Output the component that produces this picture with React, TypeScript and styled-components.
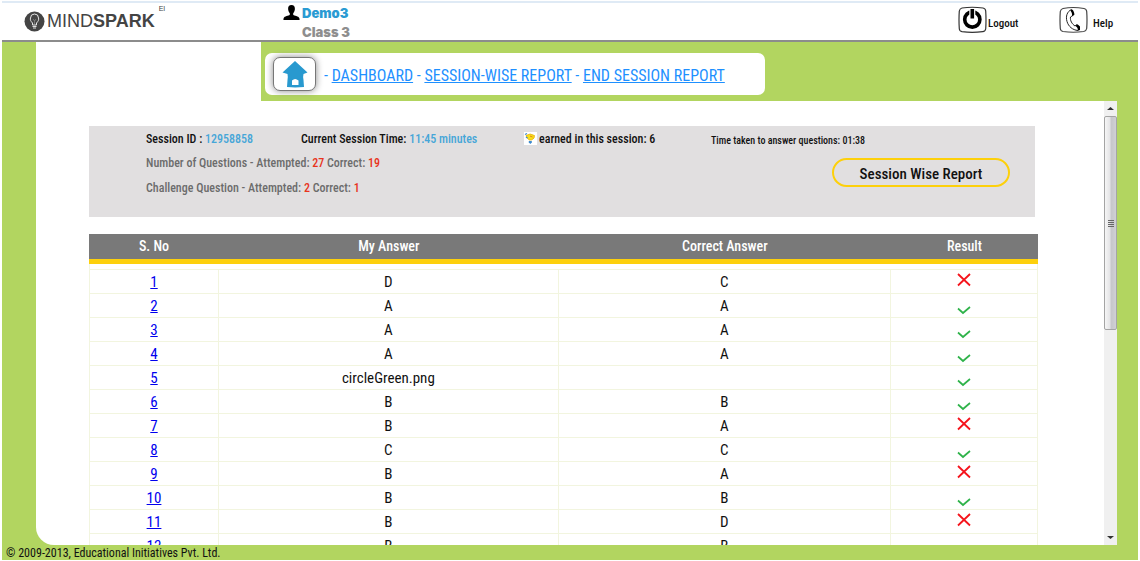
import React from "react";
import styled, { createGlobalStyle } from "styled-components";

const GlobalStyle = createGlobalStyle`
  * { box-sizing: border-box; }
  body {
    margin: 0;
    background: #fff;
    font-family: "Roboto Condensed", "Liberation Sans", sans-serif;
    color: #111;
  }
`;

const green = "#b2d560";
const gold = "#fdd00b";
const rule = "#f2f5df";

const Page = styled.div`
  display: flex;
  flex-direction: column;
  height: 100vh;
  padding: 1px 2px;
`;

const Header = styled.header`
  display: flex;
  align-items: flex-start;
  flex: none;
  height: 41px;
  border-top: 2px solid #dfeaf5;
  border-bottom: 2px solid #8c8c8c;
`;

const Logo = styled.div`
  display: flex;
  align-items: center;
  width: 281px;
  padding: 6px 0 0 22px;
  font: 18px/24px "Liberation Sans", sans-serif;
  color: #444;

  svg { margin-right: 2px; }
`;

const LogoMark = styled.sup`
  align-self: flex-start;
  margin-left: 4px;
  font-size: 7px;
  line-height: 6px;
  margin-top: -3px;
`;

const User = styled.div`
  display: flex;
  flex: 1;
  padding-top: 1px;
`;

const UserText = styled.div`
  font: 900 13px/19px Inter, sans-serif;
  margin-left: 2px;
`;

const UserName = styled.div`color: #2a9bd3;`;
const UserClass = styled.div`color: #8e8e8e;`;

const HeaderButton = styled.button<{ $width: number; $gap: number }>`
  display: flex;
  align-items: center;
  gap: ${(p) => p.$gap}px;
  width: ${(p) => p.$width}px;
  padding: 2px 0 0;
  border: 0;
  background: none;
  font: 500 11px/28px "Roboto Condensed", sans-serif;
  color: #111;

  span { padding-top: 9px; line-height: 20px; }
`;

const Body = styled.div`
  display: flex;
  flex-direction: column;
  flex: 1;
  min-height: 0;
  background: ${green};
`;

const TopBar = styled.div`
  display: flex;
  flex: none;
  height: 59px;
  padding-left: 34px;
`;

const Tab = styled.div`
  width: 225px;
  background: #fff;
`;

const Breadcrumb = styled.nav`
  display: flex;
  align-items: center;
  min-width: 500px;
  height: 42px;
  margin: 11px 0 0 4px;
  padding: 0 8px;
  border-radius: 7px;
  background: #fff;
  font-size: 16px;
  line-height: 24px;
  color: #1e90ff;

  > span { padding-top: 3px; }
`;

const HomeButton = styled.button`
  display: flex;
  align-items: center;
  justify-content: center;
  width: 43px;
  height: 34px;
  margin-right: 8px;
  padding: 0;
  border: 1px solid #777;
  border-radius: 7px;
  background: #fff;
  box-shadow: 0 0 7px #888;
`;

const Crumb = styled.a`
  color: #1e90ff;
  text-decoration: underline;
`;

const Content = styled.main`
  display: flex;
  flex: 1;
  min-height: 0;
  margin: 0 21px 0 34px;
  border-bottom-left-radius: 18px;
  background: #fff;
  overflow: hidden;
`;

const Scroller = styled.div`
  flex: 1;
  padding: 25px 66px 0 53px;
  overflow: auto;
  scrollbar-width: none;
`;

const Scrollbar = styled.div`
  display: flex;
  flex-direction: column;
  align-items: center;
  width: 13px;
  background: #f0f0f0;
`;

const ScrollArrow = styled.svg`
  flex: none;
  width: 13px;
  height: 15px;
`;

const Thumb = styled.div`
  display: flex;
  flex-direction: column;
  align-items: center;
  justify-content: center;
  gap: 1px;
  width: 13px;
  height: 214px;
  border: 1px solid #a4a4a4;
  border-radius: 2px;
  background: linear-gradient(90deg, #f6f6f6, #e4e4e6 45%, #c6c6ca 55%, #d0d0d4);

  i { width: 6px; height: 1px; background: #666; }
`;

const Track = styled.div`flex: 1;`;

const Summary = styled.section`
  display: grid;
  grid-template-columns: 155px 223px 187px 1fr;
  grid-template-rows: 25px 24px 25px;
  align-items: center;
  align-content: start;
  height: 91px;
  margin-right: 3px;
  padding-left: 57px;
  background: #e1dfe0;
  font-size: 12px;
  font-weight: 500;
  line-height: 24px;
  white-space: nowrap;
`;

const Value = styled.span`color: #46a6d8;`;
const Count = styled.span`color: #e8341c;`;

const Earned = styled.span`
  display: flex;
  align-items: center;
  gap: 2px;
`;

const TimeTaken = styled.span`
  padding-top: 5px;
  font-size: 10px;
`;

const Totals = styled.span`
  grid-column: 1 / 4;
  color: #6c6c6c;
`;

const ReportButton = styled.button`
  grid-column: 4;
  grid-row: 2 / 4;
  justify-self: end;
  align-self: start;
  width: 178px;
  height: 29px;
  margin: 7px 25px 0 0;
  padding: 2px 0 0;
  border: 2px solid ${gold};
  border-radius: 15px;
  background: transparent;
  font: 500 15px/20px "Roboto Condensed", sans-serif;
  color: #111;
`;

const Results = styled.table`
  width: 100%;
  margin-top: 17px;
  border-spacing: 0;
  table-layout: fixed;
  text-align: center;
  font-size: 15px;
  line-height: 20px;
`;

const HeadCell = styled.th<{ $width: string }>`
  width: ${(p) => p.$width};
  height: 30px;
  padding: 0 0 2px;
  border-bottom: 5px solid ${gold};
  background: #797979;
  color: #fff;
  font-size: 14px;
  font-weight: 500;
`;

const Spacer = styled.td`
  height: 6px;
  padding: 0;
  border: solid ${rule};
  border-width: 0 1px 1px;
`;

const Cell = styled.td`
  height: 24px;
  padding: 1px 0 0;
  border-right: 1px solid ${rule};
  border-bottom: 1px solid ${rule};
  &:first-child { border-left: 1px solid ${rule}; }
  svg { display: block; margin: 0 auto; }
`;

const RowLink = styled.a`
  color: #00e;
  text-decoration: underline;
`;

const Footer = styled.footer`
  flex: none;
  height: 15px;
  padding-left: 4px;
  font-size: 12px;
  line-height: 16px;
`;

const Bulb = () => (
  <svg width="21" height="21" viewBox="0 0 21 21" fill="none">
    <circle cx="10.500" cy="10.500" r="10" fill="#444" />
    <path d="M8.500 14v-2c-2-2-2.500-3.500-2-5a4 4 0 0 1 8 0c.5 1.500 0 3-2 5v2z" stroke="#e6e6e6" strokeWidth="1" />
    <path d="M9 8l1.500 2L12 8M10.500 10v4" stroke="#999" strokeWidth=".6" />
    <path d="M8.500 15.500h4M9 17h3" stroke="#ddd" strokeWidth="1" />
  </svg>
);

const Person = () => (
  <svg width="17" height="17" viewBox="0 0 17 17">
    <path fill="#000" d="M8.500 1C6.200 1 5 2.600 5.100 4.900c.1 1.900.9 3.500 1.700 4.300v1.600C5.600 12 1.500 12 .6 14.200L.4 16h16.200l-.2-1.800c-.9-2.200-5-2.200-6.200-3.400V9.200c.8-.8 1.600-2.400 1.700-4.300C12 2.600 10.800 1 8.500 1z" />
  </svg>
);

const Power = () => (
  <svg width="29" height="28" viewBox="0 0 29 28" fill="none">
    <path d="M4 2Q14 .5 25 2q2.500.5 2.700 3 .6 9 0 18-.5 2.500-3 2.700Q14 27 4 25.700q-2.500-.5-2.700-3-.6-9 0-17.700.5-2.500 2.700-3z" stroke="#333" strokeWidth="1.200" />
    <circle cx="14.300" cy="13.500" r="7.600" stroke="#000" strokeWidth="3.600" />
    <path d="M11.300 3h6v10h-6z" fill="#fff" />
    <path d="M14.300 3v9.500" stroke="#000" strokeWidth="3.600" />
  </svg>
);

const Phone = () => (
  <svg width="29" height="28" viewBox="0 0 29 28" fill="none">
    <path d="M4 2.500Q14 .5 25 2.500q2.500.5 2.700 3 .6 8.500 0 17-.5 2.500-3 3Q14 27 4 25.500q-2.500-.5-2.700-3-.6-8.500 0-17 .5-2.500 2.700-3z" stroke="#444" strokeWidth="1.200" />
    <path d="M12.500 3.500c-4.500 2-6 7-4.500 12 1.500 5 5.500 8.500 11 9" stroke="#222" strokeWidth="1" />
    <path d="M14.500 9l-3 2c-.6 3.500 1.500 7 4.500 9l2-1.500" stroke="#222" strokeWidth="1" />
    <path d="M12.200 3.500c1.500-.3 2.800 1.500 3.300 5l-2.200 1.700q.2-3-1.800-5.700zM16.500 19.800l2-1.600 2.500 2.300v3.500l-2 .7q.5-2.500-2.500-4.900z" fill="#000" />
  </svg>
);

const Home = () => (
  <svg width="26" height="28" viewBox="0 0 26 28">
    <path fill="#2899cf" d="M13 1l12.500 11.500-4 1.500q-.8 3 0 6l.5 7q-9 .8-17 0l.5-7q.6-3 0-6l-5-1.500z" />
    <path fill="#fff" d="M10 25v-4.500q3-3 6.500 0V25z" />
  </svg>
);

const Sparkie = () => (
  <svg width="13" height="13" viewBox="0 0 13 13">
    <path fill="#fff" d="M0 0h13v13H0z" />
    <path fill="#f7e01a" stroke="#e3a70f" strokeWidth=".7" d="M2 3.500Q6 .5 10.500 3.500q.5 3-3 4.500H5.300Q2.500 6.500 2 3.500z" />
    <path d="M1 2.500l2-1M2 5l1.500 1" stroke="#3d8bd0" strokeWidth="1.300" />
    <path d="M6 4l2.500 1" stroke="#e88219" strokeWidth="1" />
    <path d="M4.800 9h3v1.500L6.300 12l-1.500-1.500z" fill="#3d8bd0" />
  </svg>
);

const Cross = () => (
  <svg width="16" height="20" viewBox="0 0 16 20" role="img" aria-label="Wrong">
    <path d="M2 2l12 11.500M14 2L2 13.500" stroke="#f5141c" strokeWidth="1.800" />
  </svg>
);

const Check = () => (
  <svg width="16" height="20" viewBox="0 0 16 20" role="img" aria-label="Right" fill="none">
    <path d="M2 12.500l5 4.500 7-6" stroke="#2fb34a" strokeWidth="1.700" />
  </svg>
);

const rows: [string, string, boolean][] = [
  ["D", "C", false],
  ["A", "A", true],
  ["A", "A", true],
  ["A", "A", true],
  ["circleGreen.png", "", true],
  ["B", "B", true],
  ["B", "A", false],
  ["C", "C", true],
  ["B", "A", false],
  ["B", "B", true],
  ["B", "D", false],
  ["B", "B", true],
];

export default function App() {
  return (
    <Page>
      <GlobalStyle />
      <Header>
        <Logo>
          <Bulb />
          <span>MIND<b>SPARK</b></span>
          <LogoMark>EI</LogoMark>
        </Logo>
        <User>
          <Person />
          <UserText>
            <UserName>Demo3</UserName>
            <UserClass>Class 3</UserClass>
          </UserText>
        </User>
        <HeaderButton $width={101} $gap={1}>
          <Power />
          <span>Logout</span>
        </HeaderButton>
        <HeaderButton $width={79} $gap={5}>
          <Phone />
          <span>Help</span>
        </HeaderButton>
      </Header>
      <Body>
        <TopBar>
          <Tab />
          <Breadcrumb>
            <HomeButton aria-label="Home"><Home /></HomeButton>
            <span>
              - <Crumb href="#dashboard">DASHBOARD</Crumb> - <Crumb href="#sessions">SESSION-WISE REPORT</Crumb> -{" "}
              <Crumb href="#end">END SESSION REPORT</Crumb>
            </span>
          </Breadcrumb>
        </TopBar>
        <Content>
          <Scroller>
            <Summary>
              <span>Session ID : <Value>12958858</Value></span>
              <span>Current Session Time: <Value>11:45 minutes</Value></span>
              <Earned><Sparkie />earned in this session: 6</Earned>
              <TimeTaken>Time taken to answer questions: 01:38</TimeTaken>
              <Totals>Number of Questions - Attempted: <Count>27</Count> Correct: <Count>19</Count></Totals>
              <Totals>Challenge Question - Attempted: <Count>2</Count> Correct: <Count>1</Count></Totals>
              <ReportButton>Session Wise Report</ReportButton>
            </Summary>
            <Results>
              <thead>
                <tr>
                  <HeadCell $width="13.7%">S. No</HeadCell>
                  <HeadCell $width="35.8%">My Answer</HeadCell>
                  <HeadCell $width="35%">Correct Answer</HeadCell>
                  <HeadCell $width="15.5%">Result</HeadCell>
                </tr>
              </thead>
              <tbody>
                <tr><Spacer colSpan={4} /></tr>
                {rows.map(([mine, correct, right], i) => (
                  <tr key={i}>
                    <Cell><RowLink href={`#q${i + 1}`}>{i + 1}</RowLink></Cell>
                    <Cell>{mine}</Cell>
                    <Cell>{correct}</Cell>
                    <Cell>{right ? <Check /> : <Cross />}</Cell>
                  </tr>
                ))}
              </tbody>
            </Results>
          </Scroller>
          <Scrollbar aria-hidden="true">
            <ScrollArrow viewBox="0 0 13 15"><path d="M3 9l3.500-3L10 9z" fill="#333" /></ScrollArrow>
            <Thumb><i /><i /><i /><i /></Thumb>
            <Track />
            <ScrollArrow viewBox="0 0 13 15"><path d="M3 6l3.500 3L10 6z" fill="#333" /></ScrollArrow>
          </Scrollbar>
        </Content>
        <Footer>© 2009-2013, Educational Initiatives Pvt. Ltd.</Footer>
      </Body>
    </Page>
  );
}
